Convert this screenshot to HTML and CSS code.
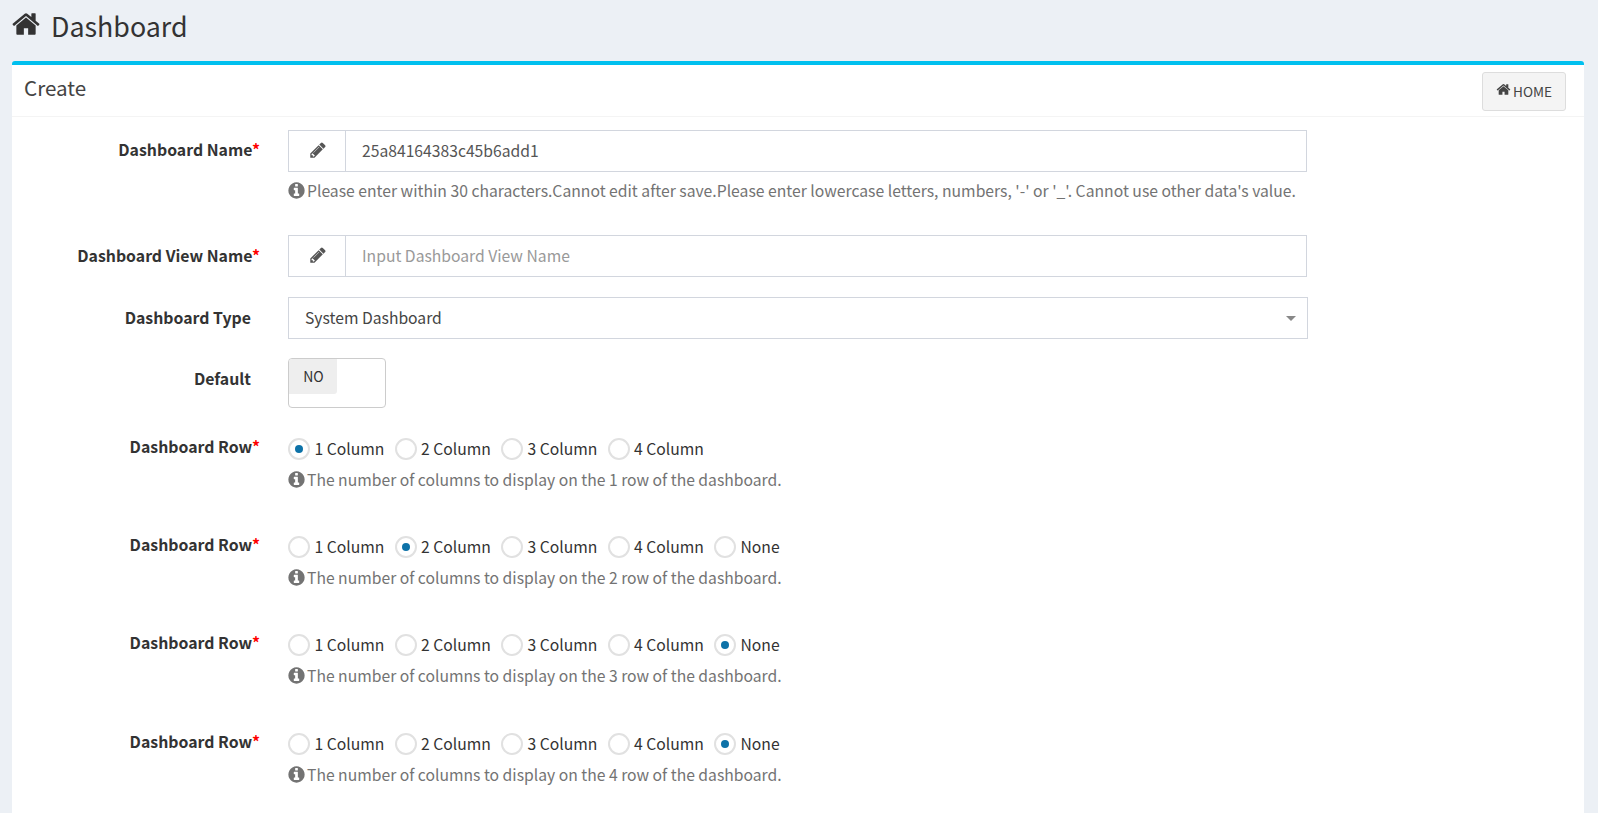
FILE: index.html
```html
<!DOCTYPE html>
<html lang="en">
<head>
    <meta charset="UTF-8">
    <meta name="viewport" content="width=device-width, initial-scale=1.0">
    <title>Dashboard</title>
    <link rel="stylesheet" href="styles.css">
</head>
<body>
    <svg class="icon-defs" aria-hidden="true">
        <symbol id="i-home" viewBox="0 0 1792 1792"><path d="M1472 992v480q0 26-19 45t-45 19h-384v-384h-256v384h-384q-26 0-45-19t-19-45v-480q0-1 .5-3t.5-3l575-474 575 474q1 2 1 6zm223-69l-62 74q-8 9-21 11h-3q-13 0-21-7l-692-577-692 577q-12 8-24 7-13-2-21-11l-62-74q-8-10-7-23.500t11-21.500l719-599q32-26 76-26t76 26l244 204v-195q0-14 9-23t23-9h192q14 0 23 9t9 23v408l219 182q10 8 11 21.500t-7 23.500z"/></symbol>
        <symbol id="i-pencil" viewBox="0 0 1792 1792"><path d="M491 1536l91-91-235-235-91 91v107h128v128h107zm523-928q0-22-22-22-10 0-17 7l-542 542q-7 7-7 17 0 22 22 22 10 0 17-7l542-542q7-7 7-17zm-54-192l416 416-832 832h-416v-416zm683 96q0 53-37 90l-166 166-416-416 166-165q36-38 90-38 53 0 91 38l235 234q37 39 37 91z"/></symbol>
        <symbol id="i-info" viewBox="0 0 1792 1792"><path d="M1152 1376v-160q0-14-9-23t-23-9h-96v-512q0-14-9-23t-23-9h-320q-14 0-23 9t-9 23v160q0 14 9 23t23 9h96v320h-96q-14 0-23 9t-9 23v160q0 14 9 23t23 9h448q14 0 23-9t9-23zm-128-896v-160q0-14-9-23t-23-9h-192q-14 0-23 9t-9 23v160q0 14 9 23t23 9h192q14 0 23-9t9-23zm640 416q0 209-103 385.500t-279.500 279.500-385.500 103-385.500-103-279.500-279.500-103-385.500 103-385.500 279.500-279.500 385.500-103 385.500 103 279.500 279.500 103 385.500z"/></symbol>
    </svg>

    <h1 class="page-title"><svg class="title-icon"><use href="#i-home"/></svg>Dashboard</h1>

    <div class="box">
        <div class="box-header">
            <h3>Create</h3>
            <button type="button" class="btn-home"><svg class="btn-icon"><use href="#i-home"/></svg>HOME</button>
        </div>

        <form class="box-body">
            <div class="row row-name">
                <label class="row-label">Dashboard Name<em>*</em></label>
                <div class="row-field">
                    <div class="input-group">
                        <span class="addon"><svg class="pencil"><use href="#i-pencil"/></svg></span>
                        <input type="text" value="25a84164383c45b6add1">
                    </div>
                    <p class="help"><svg class="info"><use href="#i-info"/></svg>Please enter within 30 characters.Cannot edit after save.Please enter lowercase letters, numbers, '-' or '_'. Cannot use other data's value.</p>
                </div>
            </div>

            <div class="row row-view">
                <label class="row-label">Dashboard View Name<em>*</em></label>
                <div class="row-field">
                    <div class="input-group">
                        <span class="addon"><svg class="pencil"><use href="#i-pencil"/></svg></span>
                        <input type="text" placeholder="Input Dashboard View Name">
                    </div>
                </div>
            </div>

            <div class="row row-type">
                <label class="row-label no-star">Dashboard Type</label>
                <div class="row-field">
                    <div class="select">System Dashboard<span class="caret"></span></div>
                </div>
            </div>

            <div class="row row-default">
                <label class="row-label no-star">Default</label>
                <div class="row-field">
                    <div class="toggle"><span class="toggle-no">NO</span></div>
                </div>
            </div>

            <div class="row row-radio">
                <label class="row-label">Dashboard Row<em>*</em></label>
                <div class="row-field">
                    <div class="radios">
                        <label class="radio"><input type="radio" name="row1" checked>1 Column</label>
                        <label class="radio"><input type="radio" name="row1">2 Column</label>
                        <label class="radio"><input type="radio" name="row1">3 Column</label>
                        <label class="radio"><input type="radio" name="row1">4 Column</label>
                    </div>
                    <p class="help"><svg class="info"><use href="#i-info"/></svg>The number of columns to display on the 1 row of the dashboard.</p>
                </div>
            </div>

            <div class="row row-radio">
                <label class="row-label">Dashboard Row<em>*</em></label>
                <div class="row-field">
                    <div class="radios">
                        <label class="radio"><input type="radio" name="row2">1 Column</label>
                        <label class="radio"><input type="radio" name="row2" checked>2 Column</label>
                        <label class="radio"><input type="radio" name="row2">3 Column</label>
                        <label class="radio"><input type="radio" name="row2">4 Column</label>
                        <label class="radio"><input type="radio" name="row2">None</label>
                    </div>
                    <p class="help"><svg class="info"><use href="#i-info"/></svg>The number of columns to display on the 2 row of the dashboard.</p>
                </div>
            </div>

            <div class="row row-radio">
                <label class="row-label">Dashboard Row<em>*</em></label>
                <div class="row-field">
                    <div class="radios">
                        <label class="radio"><input type="radio" name="row3">1 Column</label>
                        <label class="radio"><input type="radio" name="row3">2 Column</label>
                        <label class="radio"><input type="radio" name="row3">3 Column</label>
                        <label class="radio"><input type="radio" name="row3">4 Column</label>
                        <label class="radio"><input type="radio" name="row3" checked>None</label>
                    </div>
                    <p class="help"><svg class="info"><use href="#i-info"/></svg>The number of columns to display on the 3 row of the dashboard.</p>
                </div>
            </div>

            <div class="row row-radio">
                <label class="row-label">Dashboard Row<em>*</em></label>
                <div class="row-field">
                    <div class="radios">
                        <label class="radio"><input type="radio" name="row4">1 Column</label>
                        <label class="radio"><input type="radio" name="row4">2 Column</label>
                        <label class="radio"><input type="radio" name="row4">3 Column</label>
                        <label class="radio"><input type="radio" name="row4">4 Column</label>
                        <label class="radio"><input type="radio" name="row4" checked>None</label>
                    </div>
                    <p class="help"><svg class="info"><use href="#i-info"/></svg>The number of columns to display on the 4 row of the dashboard.</p>
                </div>
            </div>
        </form>
    </div>
</body>
</html>
```

FILE: styles.css
```css
* { box-sizing: border-box; }
html, body { height: 100%; overflow: hidden; }
body { margin: 0; background: #ecf0f5; color: #333; font-family: "Noto Sans CJK SC", "Open Sans", sans-serif; font-size: 15.7px; line-height: 22px; }
.icon-defs { display: none; }
svg { fill: currentColor; }

.page-title { display: flex; align-items: center; margin: 0; padding: 0 12px 10px 11px; height: 61px; font-size: 26.8px; font-weight: 400; color: #333; }
.title-icon { width: 30px; height: 30px; margin-right: 10px; margin-top: -3px; }

.box { margin: 0 14px 0 12px; background: #fff; border-top: 4px solid #00c0ef; border-radius: 3px; height: 760px; }
.box-header { display: flex; justify-content: space-between; align-items: center; height: 52px; padding: 0 18px 0 12px; border-bottom: 1px solid #f4f4f4; }
.box-header h3 { margin: -7px 0 0; font-size: 20.6px; font-weight: 400; color: #444; }
.btn-home { display: flex; align-items: center; width: 84px; height: 39px; margin-top: 1px; padding: 0 13px; background: #f4f4f4; border: 1px solid #ddd; border-radius: 3px; color: #444; font: inherit; font-size: 13.6px; }
.btn-icon { flex: none; width: 15px; height: 15px; margin: -3px 2px 0 0; }

.row { display: flex; }
.row-label { flex: none; width: 256px; padding-right: 8px; text-align: right; font-size: 15.85px; font-weight: 700; color: #333; }
.row-label em { color: #f00; font-style: normal; }
.row-label.no-star { padding-right: 17px; }
.row-field { width: 1020px; margin-left: 20px; }
.row-name { margin-top: 13px; height: 105px; }
.row-view { height: 62px; }
.row-type { height: 61px; }
.row-default { height: 80px; }
.row-radio { height: 98.2px; }
.row-name .row-label { padding-top: 9px; }
.row-view .row-label, .row-type .row-label { padding-top: 10px; }
.row-default .row-label { padding-top: 10px; }
.row-radio .row-label { margin-top: -2px; }

.input-group { display: flex; width: 1019px; height: 42px; border: 1px solid #d2d6de; }
.addon { display: flex; align-items: center; justify-content: center; flex: none; width: 57px; border-right: 1px solid #d2d6de; color: #555; }
.pencil { width: 18px; height: 18px; margin: -2px 0 0 1px; }
.input-group input { flex: 1; border: 0; outline: 0; padding: 0 15px 0 16px; font: inherit; color: #555; background: none; }
.input-group input::placeholder { color: #999; opacity: 1; }

.help { margin: 8px 0 0; color: #737373; font-size: 15.72px; white-space: nowrap; }
.row-radio .help { margin-top: 9px; font-size: 15.7px; }
.info { width: 19px; height: 19px; margin: 0 1px 0 -1px; vertical-align: -3px; }

.select { position: relative; width: 1020px; height: 42px; padding: 0 16px; line-height: 40px; border: 1px solid #d2d6de; color: #444; }
.caret { position: absolute; right: 11px; top: 18px; border-style: solid; border-width: 5px 5px 0; border-color: #888 transparent transparent; }

.toggle { width: 98px; height: 50px; border: 1px solid #ccc; border-radius: 4px; }
.toggle-no { display: block; width: 48px; height: 35px; padding-left: 1px; background: #eee; border-radius: 3px 0 3px 0; text-align: center; font-size: 14px; line-height: 35px; color: #333; }

.radios { display: flex; height: 22px; }
.radio { display: flex; align-items: center; flex: none; width: 96px; margin-right: 10.5px; white-space: nowrap; color: #333; }
.radio input { appearance: none; position: relative; flex: none; width: 22px; height: 22px; margin: 0 4.5px 0 0; background: #fff; border: 2px solid #e1e1e1; border-radius: 50%; }
.radio input:checked::after { content: ""; position: absolute; left: 5px; top: 5px; width: 8px; height: 8px; border-radius: 50%; background: #0d72a8; }
```
